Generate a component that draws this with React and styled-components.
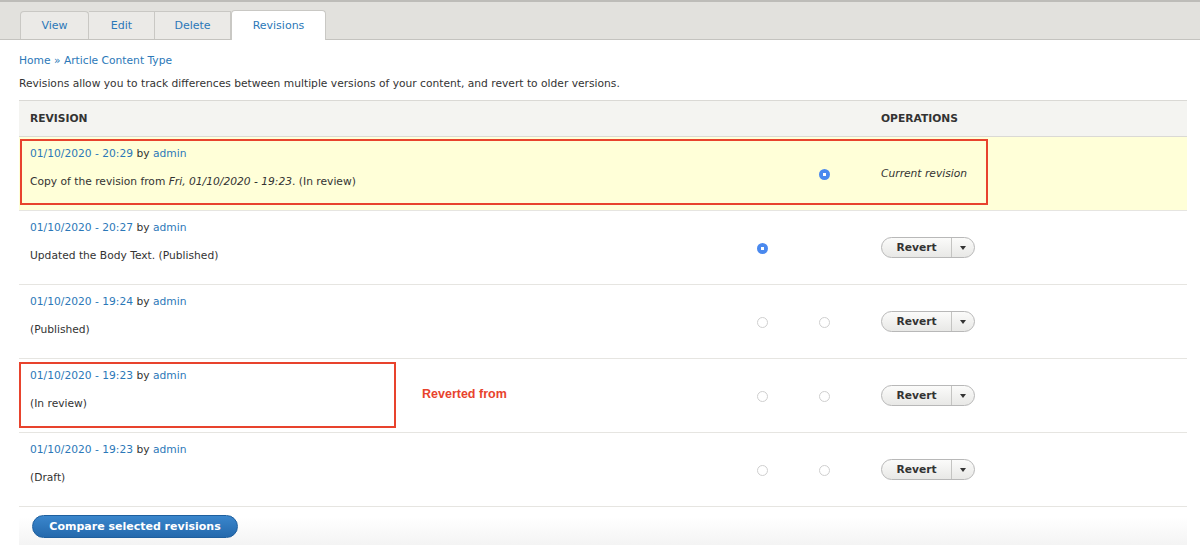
import React from "react";
import styled, { createGlobalStyle } from "styled-components";

const GlobalStyle = createGlobalStyle`
  html, body {
    margin: 0;
    padding: 0;
    background: #fff;
  }
  body {
    font-family: "DejaVu Sans", "Open Sans", sans-serif;
    font-size: 10.7px;
    color: #333;
  }
`;

const link = "#2b78b8";

const TabBar = styled.div`
  display: flex;
  align-items: flex-end;
  height: 29px;
  padding: 8px 0 0 20px;
  background: #e2e1dd;
  border-top: 2px solid #bdbcb8;
  border-bottom: 1px solid #c4c3bf;
`;

const Tab = styled.a`
  display: flex;
  align-items: center;
  justify-content: center;
  box-sizing: border-box;
  width: ${(p) => p.$w}px;
  height: ${(p) => (p.$active ? 30 : 28)}px;
  margin-bottom: ${(p) => (p.$active ? -1 : 0)}px;
  background: ${(p) => (p.$active ? "#fff" : "#ebeae7")};
  border: 1px solid #c9c8c4;
  border-bottom: none;
  border-left-width: ${(p) => (p.$first || p.$active ? 1 : 0)}px;
  border-radius: ${(p) => (p.$active || p.$first ? "4px 4px 0 0" : "0")};
  color: ${link};
  font-size: 11px;
  text-decoration: none;
`;

const Content = styled.div`
  padding: 0 13px 0 19px;
`;

const Breadcrumb = styled.div`
  margin-top: 14px;
  height: 14px;
  line-height: 14px;
  color: ${link};
`;

const Intro = styled.p`
  margin: 9px 0 0;
  height: 14px;
  line-height: 14px;
`;

const TableWrap = styled.div`
  position: relative;
  margin-top: 9px;
`;

const Table = styled.table`
  width: 100%;
  border-collapse: collapse;
  table-layout: fixed;
`;

const Th = styled.th`
  height: 35px;
  padding: 0 11px 0 ${(p) => (p.$ops ? 26 : 11)}px;
  text-align: left;
  background: #f4f4f1;
  border-top: 1px solid #dad9d5;
  border-bottom: 1px solid #dad9d5;
  font-weight: bold;
  font-size: 10.7px;
  text-transform: uppercase;
  color: #333;
`;

const Row = styled.tr`
  background: ${(p) => (p.$current ? "#ffffd8" : "#fff")};
  border-bottom: 1px solid #e6e5e1;
`;

const Cell = styled.td`
  height: 74px;
  box-sizing: border-box;
  padding: ${(p) => (p.$ops ? "0 11px 0 26px" : "0")};
  vertical-align: middle;
  text-align: ${(p) => (p.$center ? "center" : "left")};
`;

const RevCell = styled.td`
  height: 74px;
  box-sizing: border-box;
  padding: 10px 11px 0;
  vertical-align: top;
`;

const Meta = styled.div`
  height: 14px;
  line-height: 14px;
  white-space: nowrap;
`;

const Link = styled.a`
  color: ${link};
  text-decoration: none;
`;

const Desc = styled.div`
  margin-top: 14px;
  height: 14px;
  line-height: 14px;
  white-space: nowrap;
  em {
    font-style: italic;
  }
`;

const Radio = styled.span`
  display: inline-block;
  box-sizing: border-box;
  width: 11px;
  height: 11px;
  border-radius: 50%;
  vertical-align: middle;
  ${(p) =>
    p.$checked
      ? `background: radial-gradient(circle, #fff 0 1.6px, #4a89ee 2px);`
      : `border: 1px solid #cfcfcf; background: #fff;`}
`;

const Current = styled.em`
  font-style: italic;
`;

const SplitButton = styled.div`
  display: inline-flex;
  box-sizing: border-box;
  height: 21px;
  width: 94px;
  border: 1px solid #b8b8b8;
  border-radius: 11px;
  background: linear-gradient(#fbfbfa, #e8e8e6);
  overflow: hidden;
  vertical-align: middle;
`;

const ButtonLabel = styled.span`
  flex: 1;
  display: flex;
  align-items: center;
  justify-content: center;
  font-weight: bold;
  font-size: 10.7px;
  color: #333;
`;

const ButtonArrow = styled.span`
  width: 22px;
  display: flex;
  align-items: center;
  justify-content: center;
  border-left: 1px solid #c4c4c2;
  &::after {
    content: "";
    border-left: 3.5px solid transparent;
    border-right: 3.5px solid transparent;
    border-top: 4px solid #333;
  }
`;

const Marker = styled.div`
  position: absolute;
  left: ${(p) => p.$left}px;
  top: ${(p) => p.$top}px;
  width: ${(p) => p.$w}px;
  height: ${(p) => p.$h}px;
  box-sizing: border-box;
  border: 2px solid #e8432d;
  pointer-events: none;
`;

const MarkerNote = styled.div`
  position: absolute;
  left: ${(p) => p.$left}px;
  top: ${(p) => p.$top}px;
  font-family: "Liberation Sans", Arial, sans-serif;
  font-weight: bold;
  font-size: 12.5px;
  color: #e8432d;
`;

const Actions = styled.div`
  padding: 8px 0 0 13px;
  height: 40px;
  background: linear-gradient(#fff 10px, #f3f3f3 40px);
`;

const PrimaryButton = styled.button`
  width: 206px;
  height: 23px;
  border: 1px solid #1e5f9e;
  border-radius: 12px;
  background: linear-gradient(#3a86cc, #2469ad);
  color: #fff;
  font-family: "DejaVu Sans", sans-serif;
  font-weight: bold;
  font-size: 11px;
  padding: 0;
`;

const tabs = [
  { label: "View", w: 69 },
  { label: "Edit", w: 66 },
  { label: "Delete", w: 76 },
  { label: "Revisions", w: 95, active: true },
];

const revisions = [
  {
    date: "01/10/2020 - 20:29",
    desc: (
      <>
        Copy of the revision from <em>Fri, 01/10/2020 - 19:23</em>. (In review)
      </>
    ),
    current: true,
  },
  { date: "01/10/2020 - 20:27", desc: "Updated the Body Text. (Published)", left: true },
  { date: "01/10/2020 - 19:24", desc: "(Published)", left: false },
  { date: "01/10/2020 - 19:23", desc: "(In review)", left: false },
  { date: "01/10/2020 - 19:23", desc: "(Draft)", left: false },
];

const App = () => {
  return (
    <>
      <GlobalStyle />
      <TabBar>
        {tabs.map((t, i) => (
          <Tab key={t.label} $w={t.w} $active={t.active} $first={i === 0}>
            {t.label}
          </Tab>
        ))}
      </TabBar>
      <Content>
        <Breadcrumb>Home » Article Content Type</Breadcrumb>
        <Intro>
          Revisions allow you to track differences between multiple versions of
          your content, and revert to older versions.
        </Intro>
        <TableWrap>
          <Table>
            <colgroup>
              <col style={{ width: 712 }} />
              <col style={{ width: 62 }} />
              <col style={{ width: 62 }} />
              <col style={{ width: 332 }} />
            </colgroup>
            <thead>
              <tr>
                <Th>Revision</Th>
                <Th />
                <Th />
                <Th $ops>Operations</Th>
              </tr>
            </thead>
            <tbody>
              {revisions.map((r, i) => (
                <Row key={i} $current={r.current}>
                  <RevCell>
                    <Meta>
                      <Link>{r.date}</Link> by <Link>admin</Link>
                    </Meta>
                    <Desc>{r.desc}</Desc>
                  </RevCell>
                  <Cell $center>
                    {r.current ? null : <Radio $checked={r.left} />}
                  </Cell>
                  <Cell $center>
                    {r.current ? <Radio $checked /> : r.left ? null : <Radio />}
                  </Cell>
                  <Cell $ops>
                    {r.current ? (
                      <Current>Current revision</Current>
                    ) : (
                      <SplitButton>
                        <ButtonLabel>Revert</ButtonLabel>
                        <ButtonArrow />
                      </SplitButton>
                    )}
                  </Cell>
                </Row>
              ))}
            </tbody>
          </Table>
          <Marker $left={1} $top={39} $w={968} $h={66} />
          <Marker $left={0} $top={262} $w={377} $h={66} />
          <MarkerNote $left={403} $top={287}>Reverted from</MarkerNote>
        </TableWrap>
        <Actions>
          <PrimaryButton>Compare selected revisions</PrimaryButton>
        </Actions>
      </Content>
    </>
  );
};

export default App;
